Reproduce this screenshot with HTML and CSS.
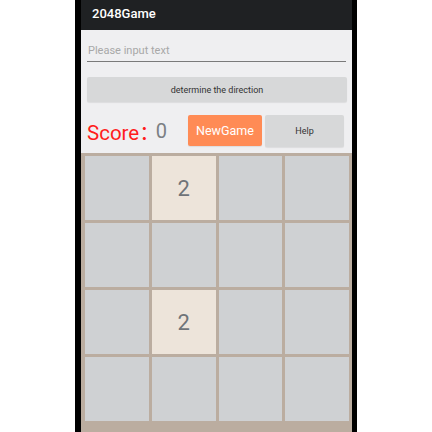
FILE: index.html
```html
<!DOCTYPE html>
<html>
<head>
<meta charset="utf-8">
<link rel="stylesheet" href="styles.css">
</head>
<body>
<div class="phone">
  <div class="screen">
    <div class="titlebar">2048Game</div>
    <div class="form">
      <input class="field" type="text" placeholder="Please input text">
      <button class="btn btn-wide">determine the direction</button>
      <div class="score-row">
        <span class="score-label">Score<span class="colon">：</span></span>
        <span class="score-value">0</span>
        <button class="btn btn-new">NewGame</button>
        <button class="btn btn-help">Help</button>
      </div>
    </div>
    <div class="board">
      <div class="cell"></div><div class="cell tile">2</div><div class="cell"></div><div class="cell"></div>
      <div class="cell"></div><div class="cell"></div><div class="cell"></div><div class="cell"></div>
      <div class="cell"></div><div class="cell tile">2</div><div class="cell"></div><div class="cell"></div>
      <div class="cell"></div><div class="cell"></div><div class="cell"></div><div class="cell"></div>
    </div>
  </div>
</div>
</body>
</html>
```
FILE: styles.css
```css
* { box-sizing: border-box; }
html, body { margin: 0; padding: 0; background: #fff; }
body { font-family: Roboto, "Liberation Sans", sans-serif; }

.phone {
  margin-left: 75px;
  width: 282px;
  height: 432px;
  background: #000;
  padding: 0 5px 0 6px;
  overflow: hidden;
}
.screen {
  height: 100%;
  background: #efeff1;
  display: flex;
  flex-direction: column;
}
.titlebar {
  height: 30px;
  background: #1f2123;
  color: #fff;
  font-size: 13px;
  font-weight: 500;
  line-height: 27px;
  padding-left: 11px;
}
.form {
  padding: 10px 6px 0 6px;
  display: flex;
  flex-direction: column;
}
.field {
  height: 22px;
  border: none;
  border-bottom: 1px solid #7a7a7a;
  background: transparent;
  font-family: inherit;
  font-size: 11px;
  padding: 0 0 0 1px;
  outline: none;
  width: 259px;
}
.field::placeholder { color: #a8a8a8; }

.btn {
  font-family: inherit;
  border: none;
  border-radius: 2px;
  background: #d7d8d9;
  color: #333;
  font-size: 9px;
  padding: 0;
  box-shadow: 0 1px 1px rgba(0,0,0,0.08);
}
.btn-wide {
  margin-top: 15px;
  height: 25px;
  width: 260px;
}
.score-row {
  margin-top: 13px;
  height: 32px;
  display: flex;
  align-items: center;
}
.score-label {
  color: #ff1c1c;
  font-family: Roboto, "Noto Sans CJK SC", sans-serif;
  font-size: 20.5px;
  white-space: nowrap;
}
.colon { letter-spacing: -4px; }
.score-value {
  color: #7b7f84;
  font-size: 20px;
}
.btn-new {
  margin-left: auto;
  height: 31px;
  width: 74px;
  background: #ff8b55;
  color: #fff;
  font-size: 12.5px;
  align-self: flex-start;
}
.btn-help {
  height: 32px;
  width: 79px;
  margin-left: 3px;
  margin-right: 2px;
  align-self: flex-start;
}

.board {
  margin-top: 6px;
  flex: 1;
  background: #bbada0;
  padding: 3px 3px 0 4px;
  display: grid;
  grid-template-columns: repeat(4, 1fr);
  grid-template-rows: repeat(4, 64px);
  gap: 3px;
  align-content: start;
}
.cell {
  background: #cfd1d3;
  display: flex;
  align-items: center;
  justify-content: center;
  font-size: 22px;
  color: #6f7378;
}
.tile { background: #ede4da; }
```
